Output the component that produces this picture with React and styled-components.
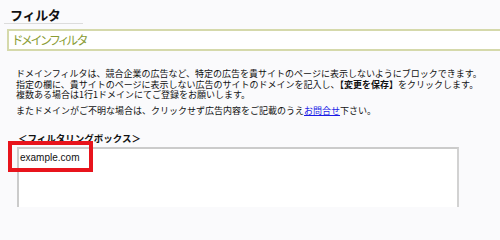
import React from "react";
import styled, { createGlobalStyle } from "styled-components";

const Global = createGlobalStyle`
  html, body { margin: 0; padding: 0; background: #fafafc; }
  body { font-family: "Noto Sans CJK JP", "Noto Sans", sans-serif; color: #111; overflow: hidden; }
`;

const Page = styled.div`
  width: 500px;
  height: 207px;
  padding-top: 7px;
  box-sizing: border-box;
`;

const Title = styled.h1`
  margin: 0 0 0 4px;
  width: 79px;
  padding: 0 0 1px 6px;
  box-sizing: border-box;
  font-size: 13px;
  line-height: 15px;
  font-weight: bold;
  letter-spacing: -0.3px;
  color: #111;
  border-bottom: 1px solid #dcdcdc;
`;

const Bar = styled.div`
  margin: 5px 0 0 7px;
  height: 18px;
  border: 2px solid #d5d9ab;
  border-right: none;
  background: #fff;
  color: #8a9c34;
  font-size: 12px;
  line-height: 18px;
  padding-left: 4px;
  font-feature-settings: "palt";
  letter-spacing: -1px;
`;

const Text = styled.p`
  margin: ${(p) => p.$mt || 0}px 0 0 16px;
  font-size: 9px;
  line-height: 10.5px;
  letter-spacing: 0px;
  color: #111;
  white-space: nowrap;
`;

const Strong = styled.b`
  font-weight: bold;
`;

const Link = styled.a`
  color: #1a1ae6;
  text-decoration: underline;
`;

const Heading = styled.h2`
  margin: 17px 0 0 18px;
  font-size: 9.5px;
  line-height: 11px;
  font-weight: bold;
  color: #111;
`;

const BoxWrap = styled.div`
  position: relative;
  margin: 3px 0 0 17px;
  width: 442px;
`;

const Area = styled.textarea`
  display: block;
  width: 442px;
  height: 80px;
  box-sizing: border-box;
  border: 2px solid #cbcbcb;
  border-right-color: #d2d2d2;
  background: #fff;
  padding: 2px 0 0 1px;
  margin: 0;
  font-family: "Liberation Sans", Arial, sans-serif;
  font-size: 10px;
  line-height: 13px;
  color: #111;
  resize: none;
  outline: none;
`;

const Highlight = styled.div`
  position: absolute;
  left: -9px;
  top: -6px;
  width: 85px;
  height: 31px;
  box-sizing: border-box;
  border: 4px solid #e8141c;
  pointer-events: none;
`;

export default function App() {
  return (
    <>
      <Global />
      <Page>
        <Title>フィルタ</Title>
        <Bar>ドメインフィルタ</Bar>
        <Text $mt={18}>
          ドメインフィルタは、競合企業の広告など、特定の広告を貴サイトのページに表示しないようにブロックできます。
          <br />
          指定の欄に、貴サイトのページに表示しない広告のサイトのドメインを記入し、<Strong>【変更を保存】</Strong>をクリックします。
          <br />
          複数ある場合は1行1ドメインにてご登録をお願いします。
        </Text>
        <Text $mt={5}>
          またドメインがご不明な場合は、クリックせず広告内容をご記載のうえ<Link href="#">お問合せ</Link>下さい。
        </Text>
        <Heading>＜フィルタリングボックス＞</Heading>
        <BoxWrap>
          <Area readOnly defaultValue="example.com" />
          <Highlight />
        </BoxWrap>
      </Page>
    </>
  );
}
